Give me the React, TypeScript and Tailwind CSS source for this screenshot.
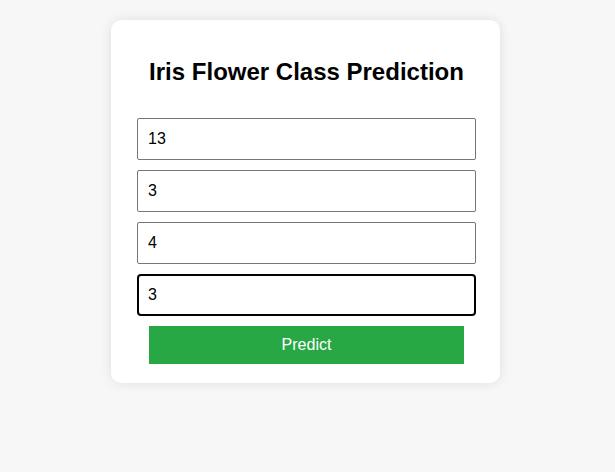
import React, { useState } from "react";

export default function App() {
  const [values, setValues] = useState(["13", "3", "4", "3"]);

  const update = (i: number, v: string) => {
    const next = [...values];
    next[i] = v;
    setValues(next);
  };

  return (
    <div
      className="flex min-h-[472px] w-full justify-center bg-[#f7f7f7] pt-5 pr-[4px]"
      style={{ fontFamily: '"Liberation Sans", Arial, sans-serif' }}
    >
      <div className="h-fit w-[389px] rounded-[10px] bg-white pl-[26px] pr-[24px] pt-[38px] pb-[19px] shadow-[0_0_12px_rgba(0,0,0,0.1)]">
        <h2 className="text-center text-[24px] leading-[28px] font-bold text-black">
          Iris Flower Class Prediction
        </h2>

        <form
          className="mt-[32px] flex flex-col gap-[10px]"
          onSubmit={(e) => e.preventDefault()}
        >
          {values.map((v, i) => (
            <input
              key={i}
              type="text"
              value={v}
              autoFocus={i === 3}
              onChange={(e) => update(i, e.target.value)}
              className={
                i === 3
                  ? "h-[42px] w-full rounded-[4px] border-2 border-black px-[9px] text-[16px] text-black outline-none"
                  : "h-[42px] w-full rounded-[2px] border border-[#767676] px-[10px] text-[16px] text-black outline-none"
              }
            />
          ))}
          <button
            type="submit"
            className="mx-auto h-[38px] w-[315px] bg-[#28a745] text-[16px] text-white"
          >
            Predict
          </button>
        </form>
      </div>
    </div>
  );
}
